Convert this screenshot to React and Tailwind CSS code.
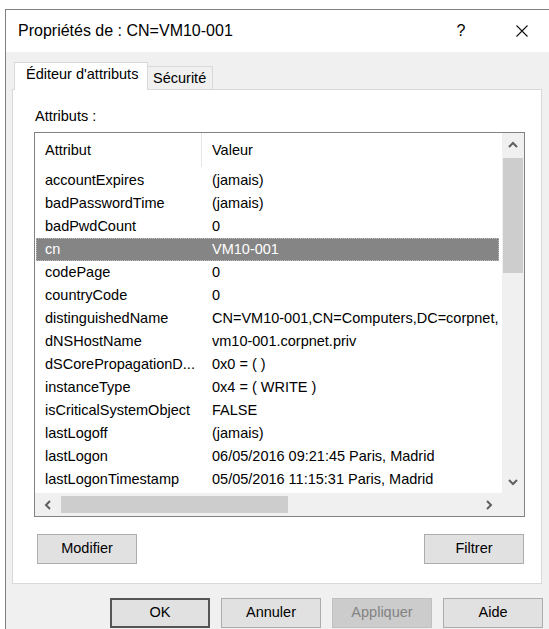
import React from "react";

const rows = [
  ["accountExpires", "(jamais)"],
  ["badPasswordTime", "(jamais)"],
  ["badPwdCount", "0"],
  ["cn", "VM10-001"],
  ["codePage", "0"],
  ["countryCode", "0"],
  ["distinguishedName", "CN=VM10-001,CN=Computers,DC=corpnet,DC=priv"],
  ["dNSHostName", "vm10-001.corpnet.priv"],
  ["dSCorePropagationD...", "0x0 = ( )"],
  ["instanceType", "0x4 = ( WRITE )"],
  ["isCriticalSystemObject", "FALSE"],
  ["lastLogoff", "(jamais)"],
  ["lastLogon", "06/05/2016 09:21:45 Paris, Madrid"],
  ["lastLogonTimestamp", "05/05/2016 11:15:31 Paris, Madrid"],
];

// small scrollbar arrow, rotated per direction
const Chevron = ({ dir }) => {
  const pts = {
    up: "1,6 5,2 9,6",
    down: "1,2 5,6 9,2",
    left: "6,1 2,5 6,9",
    right: "2,1 6,5 2,9",
  }[dir];
  const vertical = dir === "up" || dir === "down";
  return (
    <svg
      width={vertical ? 10 : 8}
      height={vertical ? 8 : 10}
      viewBox={vertical ? "0 0 10 8" : "0 0 8 10"}
    >
      <polyline points={pts} fill="none" stroke="#606060" strokeWidth="2" />
    </svg>
  );
};

const Button = ({ children, disabled, primary, className = "" }) => (
  <div
    className={
      "flex h-[30px] w-[100px] items-center justify-center " +
      (disabled
        ? "border border-[#bfbfbf] bg-[#cccccc] text-[#838383] "
        : primary
        ? "border-2 border-[#555555] bg-[#e1e1e1] text-black "
        : "border border-[#adadad] bg-[#e1e1e1] text-black ") +
      className
    }
  >
    {children}
  </div>
);

export default function App() {
  return (
    <div className="h-[629px] w-[549px] overflow-hidden bg-white pl-[5px] pt-[9px] font-['Liberation_Sans',Arial,sans-serif] text-[14.5px] text-black">
      <div className="flex h-[620px] w-[544px] flex-col border-l border-t border-[#808080] bg-[#f0f0f0]">
        {/* title bar */}
        <div className="flex h-[42px] shrink-0 items-center bg-white pl-[12px] pr-[7px]">
          <span className="text-[16px]">Propriétés de : CN=VM10-001</span>
          <div className="flex-1" />
          <span className="flex w-[40px] justify-center text-[16px]">?</span>
          <span className="ml-[21px] flex w-[40px] justify-center">
            <svg width="12" height="12" viewBox="0 0 12 12">
              <path d="M0.5 0.5 L11.5 11.5 M11.5 0.5 L0.5 11.5" stroke="#111" strokeWidth="1.1" />
            </svg>
          </span>
        </div>

        {/* tabs */}
        <div className="mt-[10px] flex h-[28px] shrink-0 items-end pl-[8px]">
          <div className="relative z-10 flex h-[28px] w-[134px] items-center border-x border-t border-[#d9d9d9] bg-white pb-[3px] pl-[11px]">
            Éditeur d'attributs
          </div>
          <div className="flex h-[24px] w-[65px] items-center border-r border-t border-[#d9d9d9] bg-[#f0f0f0] pl-[5px]">
            Sécurité
          </div>
        </div>

        {/* tab panel */}
        <div className="-mt-[1px] ml-[6px] flex h-[495px] w-[530px] shrink-0 flex-col border border-[#d9d9d9] bg-white">
          <div className="ml-[22px] mt-[18px] leading-[17px]">Attributs :</div>

          {/* attribute list */}
          <div className="ml-[21px] mt-[7px] flex h-[385px] w-[491px] border border-[#828282]">
            <div className="flex w-[467px] flex-col">
              <div className="flex h-[36px] shrink-0">
                <div className="flex w-[167px] items-center justify-between pl-[10px]">
                  <span>Attribut</span>
                  <span className="mb-[2px] h-[34px] w-px self-start bg-[#e5e5e5]" />
                </div>
                <div className="flex items-center pl-[10px]">Valeur</div>
              </div>
              <div className="flex-1 overflow-hidden">
                {rows.map(([name, value]) => {
                  const selected = name === "cn";
                  return (
                    <div
                      key={name}
                      className={
                        "ml-[1px] flex h-[23px] w-[463px] items-center overflow-hidden whitespace-nowrap " +
                        (selected
                          ? "bg-[#858585] text-white outline-1 outline-dotted -outline-offset-1 outline-[#bdbdbd]"
                          : "")
                      }
                    >
                      <div className="w-[166px] shrink-0 pl-[9px]">{name}</div>
                      <div className="shrink-0 pl-[10px]">{value}</div>
                    </div>
                  );
                })}
              </div>
              {/* horizontal scrollbar */}
              <div className="flex h-[23px] shrink-0 bg-[#f0f0f0]">
                <div className="flex w-[26px] items-center justify-center">
                  <Chevron dir="left" />
                </div>
                <div className="flex-1">
                  <div className="mt-[3px] h-[17px] w-[227px] bg-[#cdcdcd]" />
                </div>
                <div className="flex w-[26px] items-center justify-center">
                  <Chevron dir="right" />
                </div>
              </div>
            </div>

            {/* vertical scrollbar */}
            <div className="flex w-[22px] flex-col bg-[#f0f0f0]">
              <div className="flex h-[23px] items-center justify-center">
                <Chevron dir="up" />
              </div>
              <div className="flex-1 px-[1px]">
                <div className="mt-[2px] h-[115px] bg-[#cdcdcd]" />
              </div>
              <div className="flex h-[23px] items-center justify-center">
                <Chevron dir="down" />
              </div>
              <div className="h-[23px]" />
            </div>
          </div>

          <div className="mt-[17px] flex justify-between pl-[24px] pr-[17px]">
            <Button>Modifier</Button>
            <Button>Filtrer</Button>
          </div>
        </div>

        {/* dialog buttons */}
        <div className="mt-[14px] flex justify-end gap-[11px] pr-[6px]">
          <Button primary>OK</Button>
          <Button>Annuler</Button>
          <Button disabled>Appliquer</Button>
          <Button>Aide</Button>
        </div>
      </div>
    </div>
  );
}
